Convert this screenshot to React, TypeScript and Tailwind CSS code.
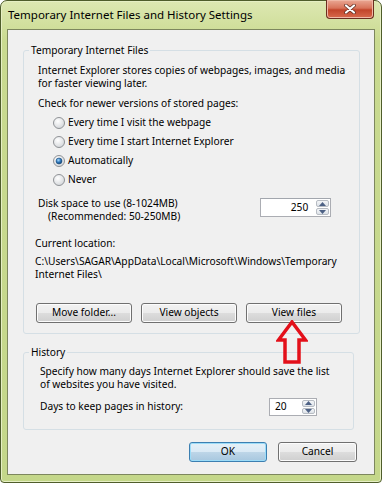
import React from "react";

function Radio({ checked }: { checked?: boolean }) {
  return (
    <svg width="12" height="12" viewBox="0 0 12 12" className="shrink-0">
      <defs>
        <radialGradient id="rgRadio" cx="40%" cy="35%" r="75%">
          <stop offset="0%" stopColor="#ffffff" />
          <stop offset="100%" stopColor="#cfd2d6" />
        </radialGradient>
        <radialGradient id="rbRadio" cx="40%" cy="35%" r="70%">
          <stop offset="0%" stopColor="#a9dcff" />
          <stop offset="55%" stopColor="#2a73b8" />
          <stop offset="100%" stopColor="#103a63" />
        </radialGradient>
      </defs>
      <circle cx="6" cy="6" r="5.5" fill="url(#rgRadio)" stroke="#8f9296" />
      {checked && <circle cx="6" cy="6" r="3" fill="url(#rbRadio)" stroke="#1d4f7e" strokeWidth="0.6" />}
    </svg>
  );
}

function SpinArrows() {
  return (
    <div className="w-[15px] flex flex-col gap-[1px] p-[1px] bg-white">
      <div className="flex-1 flex items-center justify-center rounded-[2px] border border-[#b7bcc3] bg-[linear-gradient(#f4f6f8,#dde2e8)]">
        <svg width="7" height="4" viewBox="0 0 7 4">
          <path d="M0 4 L3.5 0 L7 4 Z" fill="#4d6185" />
        </svg>
      </div>
      <div className="flex-1 flex items-center justify-center rounded-[2px] border border-[#b7bcc3] bg-[linear-gradient(#f4f6f8,#dde2e8)]">
        <svg width="7" height="4" viewBox="0 0 7 4">
          <path d="M0 0 L7 0 L3.5 4 Z" fill="#4d6185" />
        </svg>
      </div>
    </div>
  );
}

function Btn({ children, cls }: { children: React.ReactNode; cls: string }) {
  return (
    <div
      className={
        "flex items-center justify-center rounded-[3px] border border-[#707070] bg-[linear-gradient(#f2f2f2_0%,#ebebeb_50%,#dddddd_50%,#cfcfcf_100%)] shadow-[inset_0_0_0_1px_#fcfcfc] " +
        cls
      }
    >
      {children}
    </div>
  );
}

export default function App() {
  return (
    <div className="relative w-[382px] h-[483px] overflow-hidden bg-white font-['Segoe_UI','Noto_Sans',sans-serif] text-[10.2px] text-black">
      <div className="w-full h-full flex flex-col rounded-t-[7px] rounded-b-[4px] border border-[#4f5d2b] bg-[linear-gradient(#dde8b2,#c9da90_40px,#c4d78a)] shadow-[inset_0_0_0_1px_#e6efc4]">
        {/* Title bar */}
        <div className="h-[28px] flex items-start justify-between">
          <div className="pl-[7px] h-[28px] flex items-center text-[11.5px] text-black whitespace-nowrap">
            Temporary Internet Files and History Settings
          </div>
          <div className="mt-[-1px] mr-[7px] w-[48px] h-[19px] flex items-center justify-center rounded-b-[4px] border border-t-0 border-[#6b2e1f] bg-[linear-gradient(#eaa894,#d8735a_45%,#c2452a_55%,#d86a4c)] shadow-[inset_0_0_0_1px_#f0b8a6]">
            <svg width="12" height="10" viewBox="0 0 12 10">
              <path d="M2 1.5 L10 8.5 M10 1.5 L2 8.5" stroke="#5a2a1e" strokeWidth="3.6" strokeLinecap="round" />
              <path d="M2 1.5 L10 8.5 M10 1.5 L2 8.5" stroke="#ffffff" strokeWidth="2.2" strokeLinecap="round" />
            </svg>
          </div>
        </div>

        {/* Client area */}
        <div className="flex-1 mx-[6px] mb-[7px] border border-[#7d875e] bg-[#f0f0f0] flex flex-col">
          <fieldset className="mt-[13px] ml-[15px] mr-[16px] border border-[#d5dfe5] rounded-[3px] p-0">
            <legend className="ml-[5px] px-[2px] leading-[14px]">Temporary Internet Files</legend>
            <div className="pl-[11px] pr-[14px] pb-[10px]">
              <p className="mt-[7px] ml-[3px] leading-[13px] whitespace-nowrap">
                Internet Explorer stores copies of webpages, images, and media
                <br />
                for faster viewing later.
              </p>
              <p className="mt-[7px] ml-[3px] leading-[13px]">Check for newer versions of stored pages:</p>
              <div className="mt-[3px] ml-[18px] flex flex-col">
                <div className="h-[19px] flex items-center gap-[3px]">
                  <Radio />
                  <span>Every time I visit the webpage</span>
                </div>
                <div className="h-[19px] flex items-center gap-[3px]">
                  <Radio />
                  <span>Every time I start Internet Explorer</span>
                </div>
                <div className="h-[19px] flex items-center gap-[3px]">
                  <Radio checked />
                  <span>Automatically</span>
                </div>
                <div className="h-[19px] flex items-center gap-[3px]">
                  <Radio />
                  <span>Never</span>
                </div>
              </div>
              <div className="mt-[8px] flex items-start">
                <div className="flex-1 ml-[3px] leading-[13px]">
                  <div>Disk space to use (8-1024MB)</div>
                  <div className="ml-[10px]">(Recommended: 50-250MB)</div>
                </div>
                <div className="mt-[1px] mr-[14px] w-[71px] h-[19px] flex border border-[#abadb3] border-t-[#a2a6ad] bg-white">
                  <div className="flex-1 flex items-center justify-end pr-[7px]">250</div>
                  <SpinArrows />
                </div>
              </div>
              <p className="mt-[14px] leading-[13px]">Current location:</p>
              <p className="mt-[5px] leading-[13px] whitespace-nowrap">
                {"C:\\Users\\SAGAR\\AppData\\Local\\Microsoft\\Windows\\Temporary"}
                <br />
                {"Internet Files\\"}
              </p>
              <div className="mt-[22px] ml-[1px] flex gap-[9px]">
                <Btn cls="w-[96px] h-[20px]">Move folder...</Btn>
                <Btn cls="w-[96px] h-[20px]">View objects</Btn>
                <Btn cls="w-[96px] h-[20px]">View files</Btn>
              </div>
            </div>
          </fieldset>

          <fieldset className="mt-[11px] ml-[15px] mr-[20px] border border-[#d5dfe5] rounded-[3px] p-0">
            <legend className="ml-[5px] px-[2px] leading-[14px]">History</legend>
            <div className="pl-[16px] pb-[13px]">
              <p className="mt-[6px] leading-[13px] whitespace-nowrap">
                Specify how many days Internet Explorer should save the list
                <br />
                of websites you have visited.
              </p>
              <div className="mt-[7px] h-[18px] flex items-center">
                <span className="flex-1">Days to keep pages in history:</span>
                <div className="mr-[36px] w-[48px] h-[18px] flex border border-[#abadb3] bg-white">
                  <div className="flex-1 flex items-center pl-[5px]">20</div>
                  <SpinArrows />
                </div>
              </div>
            </div>
          </fieldset>

          <div className="mt-[12px] pr-[17px] flex justify-end gap-[11px]">
            <div className="w-[78px] h-[20px] flex items-center justify-center rounded-[3px] border border-[#3c7fb1] bg-[linear-gradient(#e5f0f7_0%,#d9e9f5_50%,#bed6e8_50%,#a7c7df_100%)] shadow-[inset_0_0_0_1px_#9cdcf8]">
              OK
            </div>
            <Btn cls="w-[79px] h-[20px]">Cancel</Btn>
          </div>
        </div>
      </div>

      {/* Red annotation arrow */}
      <svg className="absolute left-[276px] top-[320px]" width="32" height="45" viewBox="0 0 32 45">
        <path
          d="M16 2 L29.5 20 L23 20 L23 42 L9 42 L9 20 L2.5 20 Z"
          fill="none"
          stroke="#e3101a"
          strokeWidth="3.5"
          strokeLinejoin="miter"
        />
      </svg>
    </div>
  );
}
